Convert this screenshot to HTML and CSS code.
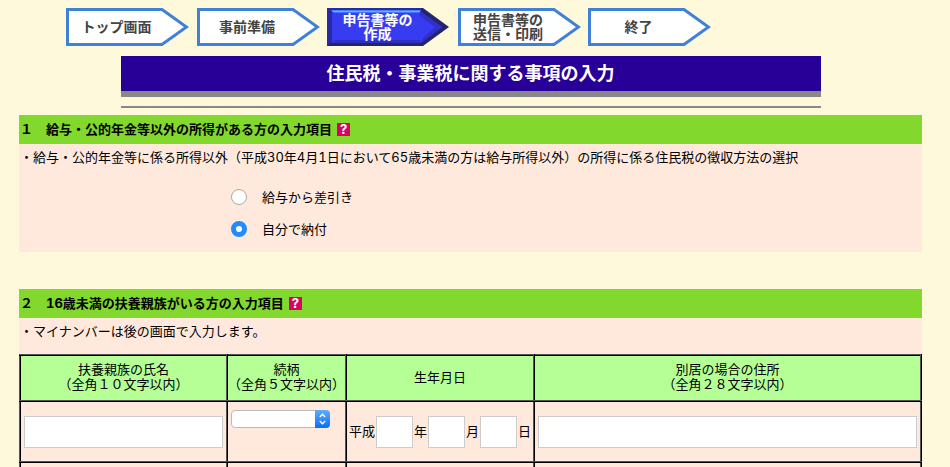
FILE: index.html
```html
<!DOCTYPE html>
<html lang="ja">
<head>
<meta charset="utf-8">
<title>住民税・事業税に関する事項の入力</title>
<link rel="stylesheet" href="styles.css">
</head>
<body>
<main class="page">
  <ol class="steps">
    <li class="step">
      <svg class="step-shape" viewBox="0 0 123 38" aria-hidden="true"><path d="M1.500 1.500H96L120.500 19L96 36.500H1.500Z" fill="#fff" stroke="#3f80d8" stroke-width="3"/></svg>
      <span class="step-label">トップ画面</span>
    </li>
    <li class="step">
      <svg class="step-shape" viewBox="0 0 123 38" aria-hidden="true"><path d="M1.500 1.500H96L120.500 19L96 36.500H1.500Z" fill="#fff" stroke="#3f80d8" stroke-width="3"/></svg>
      <span class="step-label">事前準備</span>
    </li>
    <li class="step step-current" aria-current="step">
      <svg class="step-shape" viewBox="0 0 123 38" aria-hidden="true">
        <defs><linearGradient id="shine" x1="0" y1="0" x2="0" y2="1"><stop offset="0" stop-color="#3a6cf0"/><stop offset="0.500" stop-color="#5ab8ff"/><stop offset="1" stop-color="#3c50f0"/></linearGradient></defs>
        <path d="M0 0H96L122 19L96 38H0Z" fill="#24246c"/>
        <path d="M0 0H95L93 3H5L5 34L0 38Z" fill="#2a2aa8"/>
        <path d="M5 3H93L115 19L94 35H5Z" fill="#373cf0"/>
        <path d="M5 35L8 32H93L94 35Z" fill="#2e30c4"/>
        <path d="M93 3L115 19L94 35L96 30L108 19L93 8Z" fill="#3030c8"/>
        <path d="M4 2H94L92 5H7Z" fill="url(#shine)"/>
      </svg>
      <span class="step-label">申告書等の<br>作成</span>
    </li>
    <li class="step">
      <svg class="step-shape" viewBox="0 0 123 38" aria-hidden="true"><path d="M1.500 1.500H96L120.500 19L96 36.500H1.500Z" fill="#fff" stroke="#3f80d8" stroke-width="3"/></svg>
      <span class="step-label">申告書等の<br>送信・印刷</span>
    </li>
    <li class="step">
      <svg class="step-shape" viewBox="0 0 123 38" aria-hidden="true"><path d="M1.500 1.500H96L120.500 19L96 36.500H1.500Z" fill="#fff" stroke="#3f80d8" stroke-width="3"/></svg>
      <span class="step-label">終了</span>
    </li>
  </ol>

  <header class="title">
    <h1 class="title-text">住民税・事業税に関する事項の入力</h1>
  </header>

  <form>
    <section class="section">
      <h2 class="section-head">１　給与・公的年金等以外の所得がある方の入力項目<a class="help" href="#">?</a></h2>
      <p class="note" id="method">・給与・公的年金等に係る所得以外（平成30年4月1日において65歳未満の方は給与所得以外）の所得に係る住民税の徴収方法の選択</p>
      <div class="choices" role="radiogroup" aria-labelledby="method">
        <label class="choice"><input class="radio" type="radio" name="method">給与から差引き</label>
        <label class="choice"><input class="radio" type="radio" name="method" checked>自分で納付</label>
      </div>
    </section>

    <section class="section">
      <h2 class="section-head">２　16歳未満の扶養親族がいる方の入力項目<a class="help" href="#">?</a></h2>
      <p class="note">・マイナンバーは後の画面で入力します。</p>
      <table class="family">
        <colgroup><col class="col-name"><col class="col-relation"><col class="col-birth"><col></colgroup>
        <thead>
          <tr>
            <th id="name">扶養親族の氏名<br>（全角１０文字以内）</th>
            <th id="relation">続柄<br>（全角５文字以内）</th>
            <th id="birth">生年月日</th>
            <th id="address">別居の場合の住所<br>（全角２８文字以内）</th>
          </tr>
        </thead>
        <tbody>
          <tr>
            <td><input class="field" type="text" aria-labelledby="name"></td>
            <td class="cell-top">
              <span class="select">
                <select class="select-box" aria-labelledby="relation"><option></option></select>
                <svg class="select-arrow" viewBox="0 0 15 18" aria-hidden="true">
                  <defs><linearGradient id="blue" x1="0" y1="0" x2="0" y2="1"><stop offset="0" stop-color="#62adfb"/><stop offset="1" stop-color="#0a6cfb"/></linearGradient></defs>
                  <path d="M0 0H11A4 4 0 0 1 15 4V14A4 4 0 0 1 11 18H0Z" fill="url(#blue)"/>
                  <path d="M4.800 7L7.500 4.300L10.200 7M4.800 11L7.500 13.700L10.200 11" fill="none" stroke="#fff" stroke-width="1.400"/>
                </svg>
              </span>
            </td>
            <td>
              <div class="date">
                <span>平成</span>
                <input class="field field-date" type="text" id="year"><label for="year">年</label>
                <input class="field field-date" type="text" id="month"><label for="month">月</label>
                <input class="field field-date" type="text" id="day"><label for="day">日</label>
              </div>
            </td>
            <td><input class="field" type="text" aria-labelledby="address"></td>
          </tr>
          <tr><td></td><td></td><td></td><td></td></tr>
        </tbody>
      </table>
    </section>
  </form>
</main>
</body>
</html>
```
FILE: styles.css
```css
* {
  box-sizing: border-box;
}

body {
  margin: 0;
  height: 100vh;
  overflow: hidden;
  background: #fff9dc;
  color: #000;
  font: 13px/15px Inter, "Noto Sans CJK JP", sans-serif;
  font-variant-numeric: tabular-nums;
}

.page {
  padding: 8px 28px 0 19px;
}

.steps {
  display: flex;
  justify-content: space-between;
  max-width: 692px;
  margin: 0 0 10px;
  padding: 0 0 0 47px;
  list-style: none;
}

.step {
  display: grid;
  width: 123px;
  height: 38px;
}

.step-shape,
.step-label {
  grid-area: 1 / 1;
}

.step-shape {
  width: 123px;
  height: 38px;
}

.step-label {
  place-self: center;
  padding-right: 22px;
  color: #444;
  font-size: 14px;
  font-weight: 700;
  line-height: 14px;
  text-align: center;
}

.step-current .step-label {
  color: #fff;
}

.title {
  max-width: 700px;
  margin: 0 auto 7px;
  padding-bottom: 9px;
  border-bottom: 2px solid #888;
}

.title-text {
  margin: 0;
  border-bottom: 6px solid #888;
  background: #280098;
  color: #fff;
  font-size: 18px;
  line-height: 35px;
  text-align: center;
}

.section {
  margin-bottom: 37px;
  background: #ffe9dc;
}

.section-head {
  display: flex;
  align-items: center;
  gap: 5px;
  margin: 0;
  padding: 0 1px;
  background: #82d82d;
  font-size: 13px;
  line-height: 29px;
}

.help {
  width: 13px;
  height: 13px;
  background: #dc0064;
  color: #fff;
  font-size: 13px;
  line-height: 13px;
  text-align: center;
  text-decoration: none;
}

.note {
  margin: 0;
  padding: 6px 1px 15px;
}

.choices {
  display: grid;
  gap: 16px;
  padding: 9px 0 15px 212px;
}

.choice {
  display: flex;
  align-items: center;
  gap: 15px;
  height: 16px;
  line-height: 16px;
}

.radio {
  appearance: none;
  width: 16px;
  height: 16px;
  margin: 0;
  border: 1px solid #aaa;
  border-radius: 50%;
  background: #fff;
}

.radio:checked {
  border: 5px solid #208cff;
}

.family {
  width: 100%;
  border-collapse: collapse;
  table-layout: fixed;
}

.col-name {
  width: 207px;
}

.col-relation {
  width: 119px;
}

.col-birth {
  width: 188px;
}

.family th,
.family td {
  height: 61px;
  padding: 0 3px;
  border: 2px ridge #000;
}

.family th {
  height: 46px;
  padding: 0 0 2px;
  background: #b5ff96;
  font-weight: 400;
  white-space: nowrap;
}

.family .cell-top {
  padding-top: 8px;
  vertical-align: top;
}

.field {
  display: block;
  width: 100%;
  height: 32px;
  padding: 2px;
  border: 1px solid #ccc;
  background: #fff;
  font: inherit;
}

.date {
  display: flex;
  align-items: center;
  justify-content: center;
  gap: 1px;
  white-space: nowrap;
}

.field-date {
  width: 37px;
}

.select {
  display: grid;
  width: 99px;
  height: 18px;
}

.select-box,
.select-arrow {
  grid-area: 1 / 1;
}

.select-box {
  appearance: none;
  width: 99px;
  height: 18px;
  padding: 0 16px 0 4px;
  border: 1px solid #bbb;
  border-radius: 4px;
  background: #fff;
  font: inherit;
}

.select-arrow {
  justify-self: end;
  width: 15px;
  height: 18px;
  pointer-events: none;
}
```
